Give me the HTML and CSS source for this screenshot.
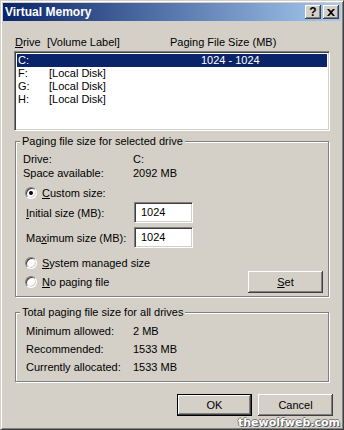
FILE: index.html
```html
<!DOCTYPE html>
<html lang="en">
<head>
    <meta charset="UTF-8">
    <meta name="viewport" content="width=device-width, initial-scale=1.0">
    <title>Virtual Memory</title>
    <link rel="stylesheet" href="styles.css">
</head>
<body>
    <div class="window">
        <div class="titlebar">
            <span class="title">Virtual Memory</span>
            <div class="caption-buttons">
                <span class="cap-btn">?</span>
                <span class="cap-btn cap-close">
                    <svg width="8" height="7" viewBox="0 0 8 7"><path d="M0 0h2l2 2 2-2h2L5 3.5 8 7H6L4 5 2 7H0l3-3.5z" fill="#000"/></svg>
                </span>
            </div>
        </div>

        <div class="content">
            <div class="list-header">
                <span class="col-drive"><u>D</u>rive</span>
                <span class="col-label">[Volume Label]</span>
                <span class="col-size">Paging File Size (MB)</span>
            </div>
            <div class="listbox">
                <div class="list-row selected"><span class="col-drive">C:</span><span class="col-label"></span><span class="col-size">1024 - 1024</span></div>
                <div class="list-row"><span class="col-drive">F:</span><span class="col-label">[Local Disk]</span></div>
                <div class="list-row"><span class="col-drive">G:</span><span class="col-label">[Local Disk]</span></div>
                <div class="list-row"><span class="col-drive">H:</span><span class="col-label">[Local Disk]</span></div>
            </div>

            <fieldset class="group group-drive">
                <legend>Paging file size for selected drive</legend>
                <div class="info-row"><span class="info-label">Drive:</span><span>C:</span></div>
                <div class="info-row"><span class="info-label">Space available:</span><span>2092 MB</span></div>

                <div class="radio-row first"><span class="radio checked"></span><span><u>C</u>ustom size:</span></div>
                <div class="size-row"><span class="size-label"><u>I</u>nitial size (MB):</span><span class="textbox">1024</span></div>
                <div class="size-row"><span class="size-label">Ma<u>x</u>imum size (MB):</span><span class="textbox">1024</span></div>

                <div class="radio-row spaced"><span class="radio"></span><span><u>S</u>ystem managed size</span></div>
                <div class="set-row">
                    <div class="radio-row"><span class="radio"></span><span><u>N</u>o paging file</span></div>
                    <span class="btn btn-set"><u>S</u>et</span>
                </div>
            </fieldset>

            <fieldset class="group group-total">
                <legend>Total paging file size for all drives</legend>
                <div class="total-row"><span class="info-label">Minimum allowed:</span><span>2 MB</span></div>
                <div class="total-row"><span class="info-label">Recommended:</span><span>1533 MB</span></div>
                <div class="total-row"><span class="info-label">Currently allocated:</span><span>1533 MB</span></div>
            </fieldset>

            <div class="actions">
                <span class="btn btn-default">OK</span>
                <span class="btn">Cancel</span>
            </div>
        </div>

        <div class="watermark">thewolfweb.com</div>
    </div>
</body>
</html>
```

FILE: styles.css
```css
body {
    margin: 0;
    background: #d4d0c8;
    font-family: 'Liberation Sans', Arial, sans-serif;
    font-size: 11px;
    color: #000;
}

.window {
    position: relative;
    width: 344px;
    height: 430px;
    box-sizing: border-box;
    padding: 2px;
    background: #d4d0c8;
    border: 1px solid;
    border-color: #d4d0c8 #404040 #404040 #d4d0c8;
    box-shadow: inset 1px 1px 0 #fff, inset -1px -1px 0 #808080;
    overflow: hidden;
}

/* Title bar */
.titlebar {
    height: 18px;
    display: flex;
    align-items: center;
    justify-content: space-between;
    background: linear-gradient(to right, #0a246a, #a6caf0);
    padding: 0 2px 0 2px;
}

.title {
    color: #fff;
    font-weight: bold;
    font-size: 12px;
}

.caption-buttons {
    display: flex;
    gap: 2px;
}

.cap-btn {
    width: 16px;
    height: 14px;
    box-sizing: border-box;
    display: flex;
    align-items: center;
    justify-content: center;
    background: #d4d0c8;
    font-weight: bold;
    font-size: 12px;
    line-height: 1;
    box-shadow: inset -1px -1px 0 #404040, inset 1px 1px 0 #fff, inset -2px -2px 0 #808080;
}

/* Main content */
.content {
    padding: 15px 11px 0 11px;
}

.list-header {
    display: flex;
    height: 13px;
    line-height: 13px;
    padding-left: 1px;
}

.col-drive {
    width: 32px;
}

.col-label {
    width: 123px;
}

.listbox {
    margin-top: 2px;
    height: 80px;
    box-sizing: border-box;
    background: #fff;
    border: 1px solid;
    border-color: #808080 #fff #fff #808080;
    box-shadow: inset 1px 1px 0 #404040, inset -1px -1px 0 #d4d0c8;
    padding: 2px 2px 0 2px;
}

.list-row {
    display: flex;
    height: 13px;
    line-height: 13px;
    padding-left: 1px;
}

.list-row .col-drive {
    width: 31px;
}

.list-row .col-label {
    width: 152px;
}

.list-row.selected {
    background: #0a246a;
    color: #fff;
}

/* Group boxes */
.group {
    margin: 4px 1px 0 1px;
    padding: 0 5px 3px 0;
    border: 1px solid #808080;
    box-shadow: inset 1px 1px 0 #fff, 1px 1px 0 #fff;
}

.group legend {
    margin-left: 4px;
    padding: 0 2px;
    line-height: 13px;
    background: #d4d0c8;
}

.group-drive {
    padding-top: 4px;
}

.info-row,
.total-row {
    display: flex;
    height: 14px;
    line-height: 14px;
    padding-left: 7px;
}

.info-label {
    width: 110px;
}

.radio-row {
    display: flex;
    align-items: center;
    gap: 5px;
    height: 16px;
    padding-left: 9px;
}

.radio-row.first {
    margin-top: 5px;
}

.radio-row.spaced {
    margin-top: 7px;
}

.radio {
    width: 12px;
    height: 12px;
    box-sizing: border-box;
    border-radius: 50%;
    background: #fff;
    border: 1px solid;
    border-color: #808080 #fff #fff #808080;
    box-shadow: inset 1px 1px 0 #404040, inset -1px -1px 0 #d4d0c8;
    display: flex;
    align-items: center;
    justify-content: center;
}

.radio.checked::after {
    content: "";
    width: 4px;
    height: 4px;
    border-radius: 50%;
    background: #000;
}

.size-row {
    display: flex;
    align-items: center;
    padding-left: 10px;
    margin-top: 1px;
}

.size-row + .size-row {
    margin-top: 4px;
}

.size-label {
    width: 108px;
}

.textbox {
    width: 59px;
    height: 21px;
    box-sizing: border-box;
    padding-left: 6px;
    line-height: 19px;
    background: #fff;
    border: 1px solid;
    border-color: #808080 #fff #fff #808080;
    box-shadow: inset 1px 1px 0 #404040, inset -1px -1px 0 #d4d0c8;
}

.set-row {
    display: flex;
    align-items: center;
    justify-content: space-between;
}

.set-row .radio-row {
    padding-left: 9px;
}

/* Buttons */
.btn {
    width: 75px;
    height: 22px;
    box-sizing: border-box;
    display: flex;
    align-items: center;
    justify-content: center;
    background: #d4d0c8;
    box-shadow: inset -1px -1px 0 #404040, inset 1px 1px 0 #fff, inset -2px -2px 0 #808080;
}

.btn-default {
    border: 1px solid #000;
}

.group-total {
    margin-top: 9px;
    padding-top: 3px;
    padding-bottom: 5px;
}

.total-row {
    height: 18px;
    line-height: 18px;
    padding-left: 10px;
}

.total-row .info-label {
    width: 107px;
}

.actions {
    display: flex;
    justify-content: flex-end;
    gap: 6px;
    margin-top: 12px;
    margin-right: -3px;
}

/* Site watermark over the screenshot */
.watermark {
    position: absolute;
    right: 3px;
    bottom: 0;
    font-family: 'DejaVu Sans', sans-serif;
    font-weight: bold;
    font-size: 11px;
    color: #fff;
    line-height: 13px;
    text-shadow: 1px 1px 0 #555, -1px 0 0 #777, 0 -1px 0 #777;
}
```
